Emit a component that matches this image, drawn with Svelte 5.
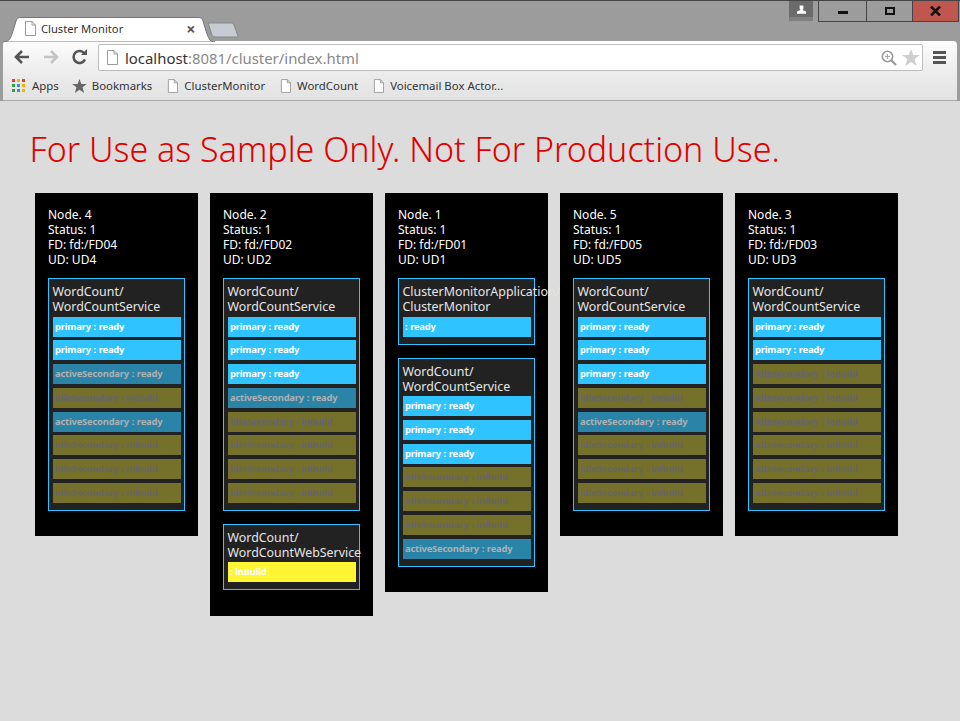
<script>
  const P = "primary : ready";
  const A = "activeSecondary : ready";
  const I = "idleSecondary : inBuild";
  const cls = (t) => (t === P ? "primary" : t === A ? "active" : t === I ? "idle" : t === ": ready" ? "primary" : "build");

  const nodes = [
    { name: "Node. 4", fd: "fd:/FD04", ud: "UD4", height: 343, services: [
      { app: "WordCount/", svc: "WordCountService", rows: [P, P, A, I, A, I, I, I] },
    ] },
    { name: "Node. 2", fd: "fd:/FD02", ud: "UD2", height: 423, services: [
      { app: "WordCount/", svc: "WordCountService", rows: [P, P, P, A, I, I, I, I] },
      { app: "WordCount/", svc: "WordCountWebService", rows: [": inBuild"] },
    ] },
    { name: "Node. 1", fd: "fd:/FD01", ud: "UD1", height: 399, services: [
      { app: "ClusterMonitorApplication/", svc: "ClusterMonitor", rows: [": ready"] },
      { app: "WordCount/", svc: "WordCountService", rows: [P, P, P, I, I, I, A] },
    ] },
    { name: "Node. 5", fd: "fd:/FD05", ud: "UD5", height: 343, services: [
      { app: "WordCount/", svc: "WordCountService", rows: [P, P, P, I, A, I, I, I] },
    ] },
    { name: "Node. 3", fd: "fd:/FD03", ud: "UD3", height: 343, services: [
      { app: "WordCount/", svc: "WordCountService", rows: [P, P, I, I, I, I, I, I] },
    ] },
  ];

  const bookmarks = ["ClusterMonitor", "WordCount", "Voicemail Box Actor..."];
  const appColors = ["#e0452f", "#f5b400", "#e0452f", "#2f9e44", "#4285f4", "#f5b400", "#2f9e44", "#4285f4", "#f5b400"];
</script>

{#snippet pageIcon(size)}
  <svg class="page-icon" width={size} height={size + 3} viewBox="0 0 12 15">
    <path d="M1.5 .5H8L11.5 4V14.5H1.5Z M8 .5V4H11.5" fill="#fff" stroke="#9a9a9a" />
  </svg>
{/snippet}

<div class="window">
  <div class="titlebar">
    <div class="tab">
      <svg class="tab-shape" width="212" height="25" viewBox="0 0 212 25">
        <path d="M0 25C7 25 8 20 10 14L13 4C14 1 15 .5 18 .5H195C198 .5 199 1 200 4L204 17C206 22 207 25 212 25Z" fill="#fff" stroke="#777" />
      </svg>
      {@render pageIcon(12)}
      <span class="tab-title">Cluster Monitor</span>
      <span class="tab-close">×</span>
    </div>
    <svg class="new-tab" width="34" height="16" viewBox="0 0 34 16">
      <path d="M1 1H24C26 1 26.500 1.500 27 3L31 14C31 15 30 15 29 15H8C6 15 5.500 14 5 13Z" fill="#c6cbd4" stroke="#858585" />
    </svg>
    <div class="spacer"></div>
    <div class="profile">
      <svg width="9" height="9" viewBox="0 0 12 11"><path d="M3.500 0H8.500V4L7.500 6L12 8V11H0V8L4.500 6L3.500 4Z" fill="#fff" /></svg>
    </div>
    <div class="controls">
      <div class="ctl min"><span></span></div>
      <div class="ctl max"><span></span></div>
      <div class="ctl close">
        <svg width="11" height="10" viewBox="0 0 11 10"><path d="M1 .5L10 9.500M10 .5L1 9.500" stroke="#111" stroke-width="2.500" fill="none" /></svg>
      </div>
    </div>
  </div>

  <div class="toolbar">
    <div class="nav">
      <svg width="18" height="16" viewBox="0 0 18 16"><path d="M16 8H3M9 2L3 8L9 14" fill="none" stroke="#555" stroke-width="2.600" /></svg>
      <svg width="18" height="16" viewBox="0 0 18 16"><path d="M2 8H15M9 2L15 8L9 14" fill="none" stroke="#c4c4c4" stroke-width="2.600" /></svg>
      <svg width="18" height="16" viewBox="0 0 18 16"><path d="M14 10.500A6 6 0 1 1 13.500 4.500" fill="none" stroke="#555" stroke-width="2.600" /><path d="M10 6H16V0Z" fill="#555" /></svg>
    </div>
    <div class="omnibox">
      {@render pageIcon(12)}
      <span class="url"><b>localhost</b>:8081/cluster/index.html</span>
      <svg class="zoom-icon" width="16" height="16" viewBox="0 0 16 16">
        <circle cx="6.500" cy="6.500" r="5.200" fill="none" stroke="#999" stroke-width="1.600" />
        <path d="M10.500 10.500L15 15" stroke="#999" stroke-width="2.200" />
        <path d="M4 6.500H9M6.500 4V9" stroke="#aaa" />
      </svg>
      <svg width="18" height="17" viewBox="0 0 18 17"><path d="M9 0L11.300 6H18L12.700 10L14.600 17L9 13L3.400 17L5.300 10L0 6H6.700Z" fill="#cfcfcf" /></svg>
    </div>
    <div class="menu"><span></span><span></span><span></span></div>
  </div>

  <div class="bookmarks">
    <span class="bm apps">
      <span class="grid">
        {#each appColors as c}<i style="background: {c}"></i>{/each}
      </span>
      Apps
    </span>
    <span class="bm star">
      <svg width="15" height="14" viewBox="0 0 18 17"><path d="M9 0L11.300 6H18L12.700 10L14.600 17L9 13L3.400 17L5.300 10L0 6H6.700Z" fill="#666" /></svg>
      Bookmarks
    </span>
    {#each bookmarks as b}
      <span class="bm">{@render pageIcon(11)}{b}</span>
    {/each}
  </div>

  <main>
    <h1>For Use as Sample Only. Not For Production Use.</h1>
    <div class="nodes">
      {#each nodes as n}
        <section class="node" style="height: {n.height}px">
          <div class="info">
            <div>{n.name}</div>
            <div>Status: 1</div>
            <div>FD: {n.fd}</div>
            <div>UD: {n.ud}</div>
          </div>
          {#each n.services as s}
            <div class="service">
              <div class="svc-name">{s.app}<br />{s.svc}</div>
              {#each s.rows as r}
                <div class="replica {cls(r)}">{r}</div>
              {/each}
            </div>
          {/each}
        </section>
      {/each}
    </div>
  </main>
</div>

<style>
  :global(body) {
    margin: 0;
    background: #dcdcdc;
  }

  .window {
    width: 960px;
    height: 721px;
    overflow: hidden;
    font-family: "Noto Sans", "Open Sans", sans-serif;
    background: #9c9c9c;
    border-top: 1px solid #444;
    box-sizing: border-box;
  }

  .titlebar {
    height: 40px;
    display: flex;
    align-items: flex-start;
  }

  .tab {
    position: relative;
    box-sizing: border-box;
    width: 212px;
    height: 25px;
    margin: 16px 0 0 3px;
    padding: 0 0 2px 21px;
    display: flex;
    align-items: center;
    flex-shrink: 0;
  }

  .tab-shape {
    position: absolute;
    left: 0;
    top: 0;
  }

  .tab .page-icon,
  .tab-title,
  .tab-close {
    position: relative;
  }

  .tab-title {
    margin-left: 5px;
    font-size: 11.200px;
    color: #333;
  }

  .tab-close {
    margin-left: 63px;
    font-size: 16px;
    font-weight: 700;
    color: #555;
  }

  .new-tab {
    margin: 21px 0 0 -8px;
    flex-shrink: 0;
  }

  .spacer {
    flex: 1;
  }

  .profile {
    width: 24px;
    height: 20px;
    background: linear-gradient(#6b6b6b 80%, #808080 80%);
    display: flex;
    justify-content: center;
    padding-top: 4px;
    box-sizing: border-box;
  }

  .controls {
    display: flex;
    margin: 0 1px 0 5px;
    height: 21px;
    border: 1px solid #444;
    border-top: 0;
    box-sizing: border-box;
  }

  .ctl {
    display: flex;
    align-items: center;
    justify-content: center;
  }

  .min {
    width: 47px;
    border-right: 1px solid #444;
  }

  .min span {
    width: 10px;
    height: 3px;
    margin-top: 3px;
    background: #111;
  }

  .max {
    width: 45px;
    border-right: 1px solid #444;
  }

  .max span {
    width: 6px;
    height: 4px;
    border: 2px solid #111;
  }

  .close {
    width: 45px;
    background: #c0574e;
  }

  .toolbar {
    height: 32px;
    margin: 0 3px;
    background: linear-gradient(#fdfdfd, #ececec);
    border-radius: 4px 4px 0 0;
    display: flex;
    align-items: center;
    padding-left: 10px;
  }

  .nav {
    display: flex;
    gap: 11px;
    width: 85px;
    flex-shrink: 0;
  }

  .omnibox {
    box-sizing: border-box;
    width: 825px;
    height: 27px;
    margin-top: 1px;
    background: #fff;
    border: 1px solid #bdbdbd;
    border-radius: 2px;
    display: flex;
    align-items: center;
    padding: 0 2px 0 7px;
  }

  .url {
    flex: 1;
    margin-left: 7px;
    font-size: 14.900px;
    color: #888;
    white-space: nowrap;
  }

  .url b {
    font-weight: 400;
    color: #333;
  }

  .zoom-icon {
    margin-right: 5px;
  }

  .menu {
    margin-left: 10px;
    width: 13px;
    display: flex;
    flex-direction: column;
    gap: 2px;
  }

  .menu span {
    height: 3px;
    background: #555;
  }

  .bookmarks {
    box-sizing: border-box;
    height: 28px;
    margin: 0 3px;
    padding: 0 0 2px 9px;
    background: linear-gradient(#ececec, #e2e2e2);
    border-bottom: 1px solid #aaa;
    display: flex;
    align-items: center;
    gap: 15px;
    font-size: 11.400px;
    color: #333;
  }

  .bm {
    display: flex;
    align-items: center;
    gap: 6px;
    white-space: nowrap;
  }

  .apps {
    gap: 7px;
    margin-right: -2px;
  }

  .star {
    gap: 5px;
  }

  .grid {
    display: grid;
    grid-template-columns: repeat(3, 3px);
    gap: 2px;
  }

  .grid i {
    width: 3px;
    height: 3px;
  }

  main {
    height: 620px;
    background: #dcdcdc;
    padding: 0;
  }

  h1 {
    margin: 0;
    padding: 26px 0 0 29.500px;
    height: 66px;
    box-sizing: border-box;
    font-size: 34px;
    font-weight: 300;
    line-height: 44px;
    color: #e00000;
    white-space: nowrap;
  }

  .nodes {
    display: flex;
    align-items: flex-start;
    gap: 12px;
    padding: 26px 0 0 35px;
  }

  .node {
    box-sizing: border-box;
    width: 163px;
    background: #000;
    padding: 14px 13px 0;
    color: #fff;
    font-size: 12px;
    line-height: 15px;
  }

  .info {
    margin-bottom: 11px;
  }

  .service {
    box-sizing: border-box;
    width: 137px;
    margin-bottom: 13px;
    padding: 5px 3px 3.300px 4px;
    background: #222;
    border: 1px solid #2fc4ff;
    color: #e6e6e6;
    font-size: 12.400px;
    white-space: nowrap;
  }

  .svc-name {
    margin: 0 0 2.550px -.5px;
  }

  .replica {
    height: 20px;
    margin-bottom: 3.750px;
    padding-left: 2px;
    font-size: 9.400px;
    font-weight: 700;
    letter-spacing: -.2px;
    word-spacing: .5px;
    line-height: 20px;
  }

  .primary {
    background: #2fc4ff;
    color: #fff;
  }

  .active {
    background: #2a84a8;
    color: #b0b0b0;
  }

  .idle {
    background: #75702a;
    color: #67676a;
  }

  .build {
    background: #fff533;
    color: #fff;
  }
</style>
